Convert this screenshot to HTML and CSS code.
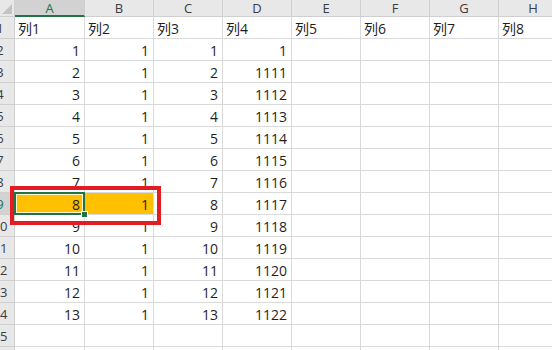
FILE: index.html
```html
<!DOCTYPE html>
<html lang="zh">
<head>
    <meta charset="UTF-8">
    <title>Sheet1</title>
    <link rel="stylesheet" href="styles.css">
</head>
<body>

<div class="sheet">
    <div class="grid">
        <!-- column headers -->
        <div class="row">
            <div class="cell corner"></div>
            <div class="cell col-head active">A</div>
            <div class="cell col-head">B</div>
            <div class="cell col-head">C</div>
            <div class="cell col-head">D</div>
            <div class="cell col-head">E</div>
            <div class="cell col-head">F</div>
            <div class="cell col-head">G</div>
            <div class="cell col-head">H</div>
        </div>
        <div class="row">
            <div class="cell row-head">1</div>
            <div class="cell text">列1</div>
            <div class="cell text">列2</div>
            <div class="cell text">列3</div>
            <div class="cell text">列4</div>
            <div class="cell text">列5</div>
            <div class="cell text">列6</div>
            <div class="cell text">列7</div>
            <div class="cell text">列8</div>
        </div>
        <div class="row">
            <div class="cell row-head">2</div>
            <div class="cell">1</div><div class="cell">1</div><div class="cell">1</div><div class="cell">1</div>
            <div class="cell"></div><div class="cell"></div><div class="cell"></div><div class="cell"></div>
        </div>
        <div class="row">
            <div class="cell row-head">3</div>
            <div class="cell">2</div><div class="cell">1</div><div class="cell">2</div><div class="cell">1111</div>
            <div class="cell"></div><div class="cell"></div><div class="cell"></div><div class="cell"></div>
        </div>
        <div class="row">
            <div class="cell row-head">4</div>
            <div class="cell">3</div><div class="cell">1</div><div class="cell">3</div><div class="cell">1112</div>
            <div class="cell"></div><div class="cell"></div><div class="cell"></div><div class="cell"></div>
        </div>
        <div class="row">
            <div class="cell row-head">5</div>
            <div class="cell">4</div><div class="cell">1</div><div class="cell">4</div><div class="cell">1113</div>
            <div class="cell"></div><div class="cell"></div><div class="cell"></div><div class="cell"></div>
        </div>
        <div class="row">
            <div class="cell row-head">6</div>
            <div class="cell">5</div><div class="cell">1</div><div class="cell">5</div><div class="cell">1114</div>
            <div class="cell"></div><div class="cell"></div><div class="cell"></div><div class="cell"></div>
        </div>
        <div class="row">
            <div class="cell row-head">7</div>
            <div class="cell">6</div><div class="cell">1</div><div class="cell">6</div><div class="cell">1115</div>
            <div class="cell"></div><div class="cell"></div><div class="cell"></div><div class="cell"></div>
        </div>
        <div class="row">
            <div class="cell row-head">8</div>
            <div class="cell">7</div><div class="cell">1</div><div class="cell">7</div><div class="cell">1116</div>
            <div class="cell"></div><div class="cell"></div><div class="cell"></div><div class="cell"></div>
        </div>
        <div class="row">
            <div class="cell row-head current">9</div>
            <div class="cell fill active-cell">8<span class="handle"></span></div>
            <div class="cell fill">1</div>
            <div class="cell">8</div><div class="cell">1117</div>
            <div class="cell"></div><div class="cell"></div><div class="cell"></div><div class="cell"></div>
        </div>
        <div class="row">
            <div class="cell row-head">10</div>
            <div class="cell">9</div><div class="cell">1</div><div class="cell">9</div><div class="cell">1118</div>
            <div class="cell"></div><div class="cell"></div><div class="cell"></div><div class="cell"></div>
        </div>
        <div class="row">
            <div class="cell row-head">11</div>
            <div class="cell">10</div><div class="cell">1</div><div class="cell">10</div><div class="cell">1119</div>
            <div class="cell"></div><div class="cell"></div><div class="cell"></div><div class="cell"></div>
        </div>
        <div class="row">
            <div class="cell row-head">12</div>
            <div class="cell">11</div><div class="cell">1</div><div class="cell">11</div><div class="cell">1120</div>
            <div class="cell"></div><div class="cell"></div><div class="cell"></div><div class="cell"></div>
        </div>
        <div class="row">
            <div class="cell row-head">13</div>
            <div class="cell">12</div><div class="cell">1</div><div class="cell">12</div><div class="cell">1121</div>
            <div class="cell"></div><div class="cell"></div><div class="cell"></div><div class="cell"></div>
        </div>
        <div class="row">
            <div class="cell row-head">14</div>
            <div class="cell">13</div><div class="cell">1</div><div class="cell">13</div><div class="cell">1122</div>
            <div class="cell"></div><div class="cell"></div><div class="cell"></div><div class="cell"></div>
        </div>
        <div class="row">
            <div class="cell row-head">15</div>
            <div class="cell"></div><div class="cell"></div><div class="cell"></div><div class="cell"></div>
            <div class="cell"></div><div class="cell"></div><div class="cell"></div><div class="cell"></div>
        </div>
        <div class="row">
            <div class="cell row-head">16</div>
            <div class="cell"></div><div class="cell"></div><div class="cell"></div><div class="cell"></div>
            <div class="cell"></div><div class="cell"></div><div class="cell"></div><div class="cell"></div>
        </div>
    </div>

    <!-- red annotation box around A9:B9 -->
    <div class="mark"></div>
</div>

</body>
</html>
```

FILE: styles.css
```css
body {
    margin: 0;
    font-family: "Open Sans", "Noto Sans CJK SC", sans-serif;
    background-color: #fff;
    overflow: hidden;
}

/* Sheet viewport (the left part of the row headers is scrolled out) */
.sheet {
    position: relative;
    width: 552px;
    height: 350px;
    overflow: hidden;
}
.grid {
    display: grid;
    grid-template-columns: 29px 70px repeat(7, 69px);
    grid-template-rows: 17px;
    grid-auto-rows: 22px;
    margin-left: -14px;
    width: max-content;
}
.row {
    display: contents;
}

/* Cells */
.cell {
    box-sizing: border-box;
    border-right: 1px solid #d9d9d9;
    border-bottom: 1px solid #d9d9d9;
    padding: 0 4px 0;
    display: flex;
    align-items: flex-end;
    justify-content: flex-end;
    font-size: 14px;
    line-height: 18px;
    color: #1f1f1f;
    white-space: nowrap;
}
.cell.text {
    justify-content: flex-start;
    padding-left: 3px;
}
.fill {
    background-color: #ffc000;
}

/* Headers */
.col-head, .row-head, .corner {
    background-color: #e8e8e8;
    color: #3c3c3c;
    justify-content: center;
    align-items: center;
    padding: 0;
    font-size: 13px;
    border-right-color: #cfcfcf;
    border-bottom-color: #cfcfcf;
}
.col-head.active {
    background-color: #d2d2d2;
    color: #217346;
    border-bottom: 2px solid #217346;
}
.row-head.current {
    background-color: #d2d2d2;
    color: #217346;
}
.corner {
    position: relative;
}
.corner::after {
    content: "";
    position: absolute;
    right: 2px;
    bottom: 2px;
    border-left: 10px solid transparent;
    border-bottom: 10px solid #c3c3c3;
}

/* Active cell */
.active-cell {
    position: relative;
}
.active-cell::after {
    content: "";
    position: absolute;
    left: -1px;
    top: -1px;
    right: -1px;
    bottom: -1px;
    border: 2px solid #217346;
    box-shadow: inset 0 0 0 1px #fff3c9;
}
.handle {
    position: absolute;
    right: -4px;
    bottom: -4px;
    width: 5px;
    height: 5px;
    background-color: #217346;
    border: 1px solid #fff;
    z-index: 1;
}

/* Red annotation */
.mark {
    position: absolute;
    left: 10px;
    top: 186px;
    width: 151px;
    height: 39px;
    box-sizing: border-box;
    border: 4px solid #e31b23;
}
```
